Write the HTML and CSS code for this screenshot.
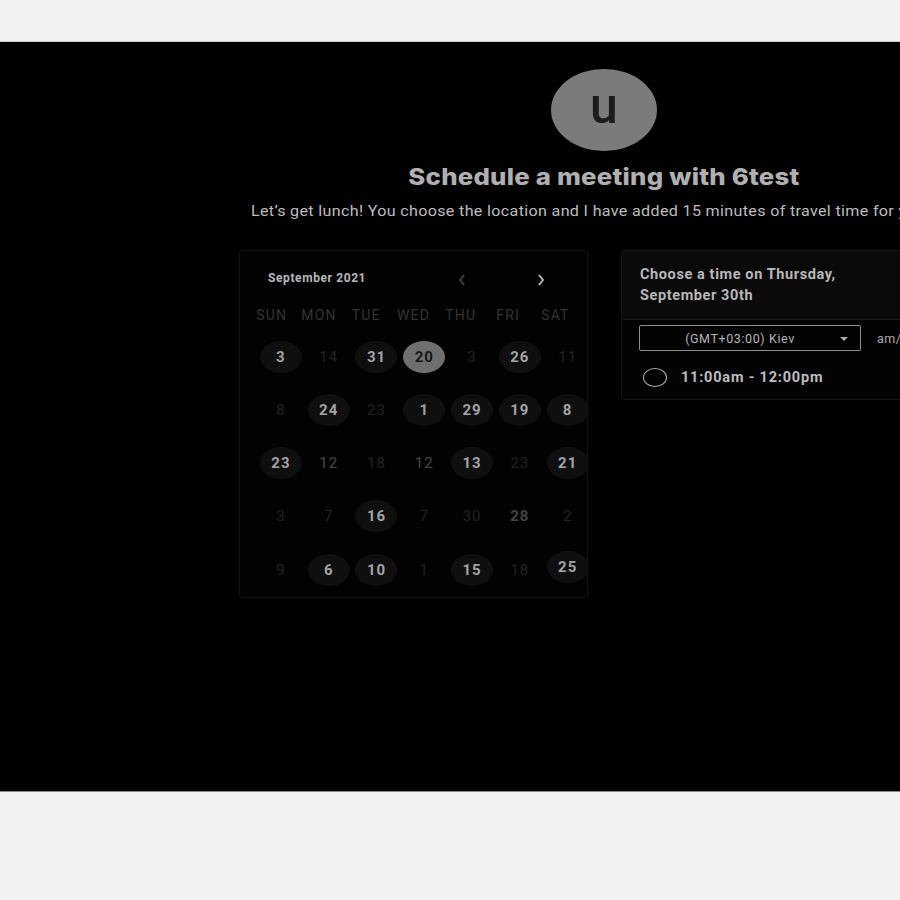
FILE: index.html
```html
<!DOCTYPE html>
<html>
<head>
<meta charset="utf-8">
<link rel="stylesheet" href="styles.css">
</head>
<body>
<div class="topbar"></div>
<main class="stage">
  <div class="wrap">
    <div class="avatar">u</div>
    <h1 class="title">Schedule a meeting with 6test</h1>
    <p class="subtitle">Let’s get lunch! You choose the location and I have added 15 minutes of travel time for you.</p>
    <div class="row">
      <section class="calendar">
        <div class="cal-head">
          <span class="month">September 2021</span>
          <svg class="arrow prev" width="10" height="14" viewBox="0 0 10 14"><path d="M7 2 L3 7 L7 12" fill="none" stroke="currentColor" stroke-width="1.6"/></svg>
          <svg class="arrow next" width="10" height="14" viewBox="0 0 10 14"><path d="M3 2 L7 7 L3 12" fill="none" stroke="currentColor" stroke-width="1.8"/></svg>
        </div>
        <div class="dow">
          <span>SUN</span><span>MON</span><span>TUE</span><span>WED</span><span>THU</span><span>FRI</span><span>SAT</span>
        </div>
        <div class="days">
          <div class="cell"><span class="d on">3</span></div>
          <div class="cell"><span class="d off">14</span></div>
          <div class="cell"><span class="d on">31</span></div>
          <div class="cell"><span class="d sel">20</span></div>
          <div class="cell"><span class="d off">3</span></div>
          <div class="cell"><span class="d on">26</span></div>
          <div class="cell"><span class="d off">11</span></div>

          <div class="cell"><span class="d off">8</span></div>
          <div class="cell"><span class="d on">24</span></div>
          <div class="cell"><span class="d off">23</span></div>
          <div class="cell"><span class="d on">1</span></div>
          <div class="cell"><span class="d on">29</span></div>
          <div class="cell"><span class="d on">19</span></div>
          <div class="cell"><span class="d on">8</span></div>

          <div class="cell"><span class="d on">23</span></div>
          <div class="cell"><span class="d mid">12</span></div>
          <div class="cell"><span class="d off">18</span></div>
          <div class="cell"><span class="d mid">12</span></div>
          <div class="cell"><span class="d on">13</span></div>
          <div class="cell"><span class="d off">23</span></div>
          <div class="cell"><span class="d on">21</span></div>

          <div class="cell"><span class="d off">3</span></div>
          <div class="cell"><span class="d off">7</span></div>
          <div class="cell"><span class="d on">16</span></div>
          <div class="cell"><span class="d off">7</span></div>
          <div class="cell"><span class="d off">30</span></div>
          <div class="cell"><span class="d mid bold">28</span></div>
          <div class="cell"><span class="d off">2</span></div>

          <div class="cell"><span class="d off">9</span></div>
          <div class="cell"><span class="d on">6</span></div>
          <div class="cell"><span class="d on">10</span></div>
          <div class="cell"><span class="d off">1</span></div>
          <div class="cell"><span class="d on">15</span></div>
          <div class="cell"><span class="d off">18</span></div>
          <div class="cell"><span class="d on up">25</span></div>
        </div>
      </section>
      <section class="panel">
        <div class="panel-head">Choose a time on Thursday,<br>September 30th</div>
        <div class="panel-body">
          <div class="controls">
            <div class="select">
              <span class="select-text">(GMT+03:00) Kiev</span>
              <svg class="caret" width="8" height="4" viewBox="0 0 8 4"><path d="M0 0 L8 0 L4 4 Z" fill="currentColor"/></svg>
            </div>
            <span class="ampm">am/pm</span>
          </div>
          <label class="slot">
            <span class="radio"></span>
            <span class="slot-text">11:00am - 12:00pm</span>
          </label>
        </div>
      </section>
    </div>
  </div>
</main>
<div class="bottom"></div>
</body>
</html>
```
FILE: styles.css
```css
html, body {
  margin: 0;
  padding: 0;
  background: #f2f2f2;
  font-family: Roboto, "Liberation Sans", Arial, sans-serif;
}

.topbar {
  height: 41px;
  border-bottom: 1px solid #cfcfcf;
  background: #f2f2f2;
}

.stage {
  height: 749px;
  background: #000;
  overflow: hidden;
  border-bottom: 1px solid #8a8a8a;
}

.wrap {
  margin-left: 239px;
  width: 730px;
  display: flex;
  flex-direction: column;
}

.avatar {
  align-self: center;
  margin-top: 27px;
  width: 106px;
  height: 82px;
  border-radius: 50%;
  background: #7b7b7b;
  color: #1c1c1c;
  font-size: 50px;
  font-weight: 500;
  line-height: 74px;
  text-align: center;
}

.title {
  margin: 11px 0 0;
  text-align: center;
  font-family: Inter, "Liberation Sans", sans-serif;
  font-weight: 800;
  font-size: 23px;
  letter-spacing: 0.2px;
  line-height: 30px;
  color: #b0b0b0;
  white-space: nowrap;
  transform: scaleX(1.12);
}

.subtitle {
  margin: 10px 0 0 12px;
  font-size: 14.5px;
  letter-spacing: 0.3px;
  line-height: 20px;
  color: #bdbdbd;
  white-space: nowrap;
  transform: scaleX(1.11);
  transform-origin: left center;
}

.row {
  margin-top: 28px;
  display: flex;
  gap: 33px;
  align-items: flex-start;
}

.calendar {
  flex: none;
  width: 347px;
  height: 346px;
  border: 1px solid #121212;
  border-radius: 3px;
  background: #020202;
}

.cal-head {
  position: relative;
  height: 24px;
  margin-top: 15px;
  padding-left: 28px;
  display: flex;
  align-items: center;
}

.month {
  font-size: 12px;
  font-weight: 700;
  letter-spacing: 0.6px;
  color: #b8b8b8;
}

.arrow {
  position: absolute;
  top: 7px;
}
.arrow.prev { left: 217px; color: #484848; }
.arrow.next { left: 296px; color: #bdbdbd; }

.dow {
  margin-top: 15px;
  padding-left: 8px;
  display: grid;
  grid-template-columns: repeat(7, 47.3px);
  height: 20px;
  line-height: 20px;
  font-size: 14px;
  letter-spacing: 1.2px;
  color: #333;
  text-align: center;
}

.days {
  margin-top: 5px;
  padding-left: 17px;
  display: grid;
  grid-template-columns: repeat(7, 47.8px);
  grid-auto-rows: 53.25px;
}

.cell {
  display: flex;
  align-items: center;
  justify-content: center;
}

.d {
  width: 42px;
  height: 32px;
  border-radius: 50%;
  display: flex;
  align-items: center;
  justify-content: center;
  font-size: 15px;
  letter-spacing: 1px;
}
.d.on {
  background: #0f0f0f;
  color: #a3a3a3;
  font-weight: 700;
}
.d.sel {
  background: #6f6f6f;
  color: #161616;
  font-weight: 700;
}
.d.off { color: #222; }
.d.mid { color: #484848; }
.d.bold { font-weight: 700; color: #444; }
.d.up { margin-top: -5px; }

.panel {
  flex: none;
  width: 346px;
  border: 1px solid #161616;
  border-radius: 3px;
  background: #030303;
}

.panel-head {
  padding: 13px 18px;
  background: #0a0a0a;
  border-bottom: 1px solid #1c1c1c;
  font-size: 14.5px;
  font-weight: 700;
  letter-spacing: 0.6px;
  line-height: 21px;
  color: #b8b8b8;
}

.panel-body {
  padding: 5px 0 10px 17px;
}

.controls {
  display: flex;
  align-items: center;
  gap: 16px;
}

.select {
  position: relative;
  height: 24px;
  width: 200px;
  padding-right: 20px;
  border: 1px solid #8e8e8e;
  border-radius: 2px;
  display: flex;
  align-items: center;
  justify-content: center;
}

.select-text {
  font-size: 12.5px;
  letter-spacing: 0.6px;
  color: #b5b5b5;
}

.caret {
  position: absolute;
  right: 12px;
  top: 11px;
  color: #aaa;
}

.ampm {
  font-size: 12.5px;
  color: #aaa;
  letter-spacing: 0.5px;
}

.slot {
  margin-top: 14px;
  height: 24px;
  display: flex;
  align-items: center;
  gap: 14px;
  padding-left: 4px;
}

.radio {
  width: 22px;
  height: 17px;
  border: 1.5px solid #b0b0b0;
  border-radius: 50%;
}

.slot-text {
  font-size: 14.5px;
  font-weight: 700;
  letter-spacing: 0.8px;
  color: #bdbdbd;
}

.bottom {
  height: 108px;
}
```
